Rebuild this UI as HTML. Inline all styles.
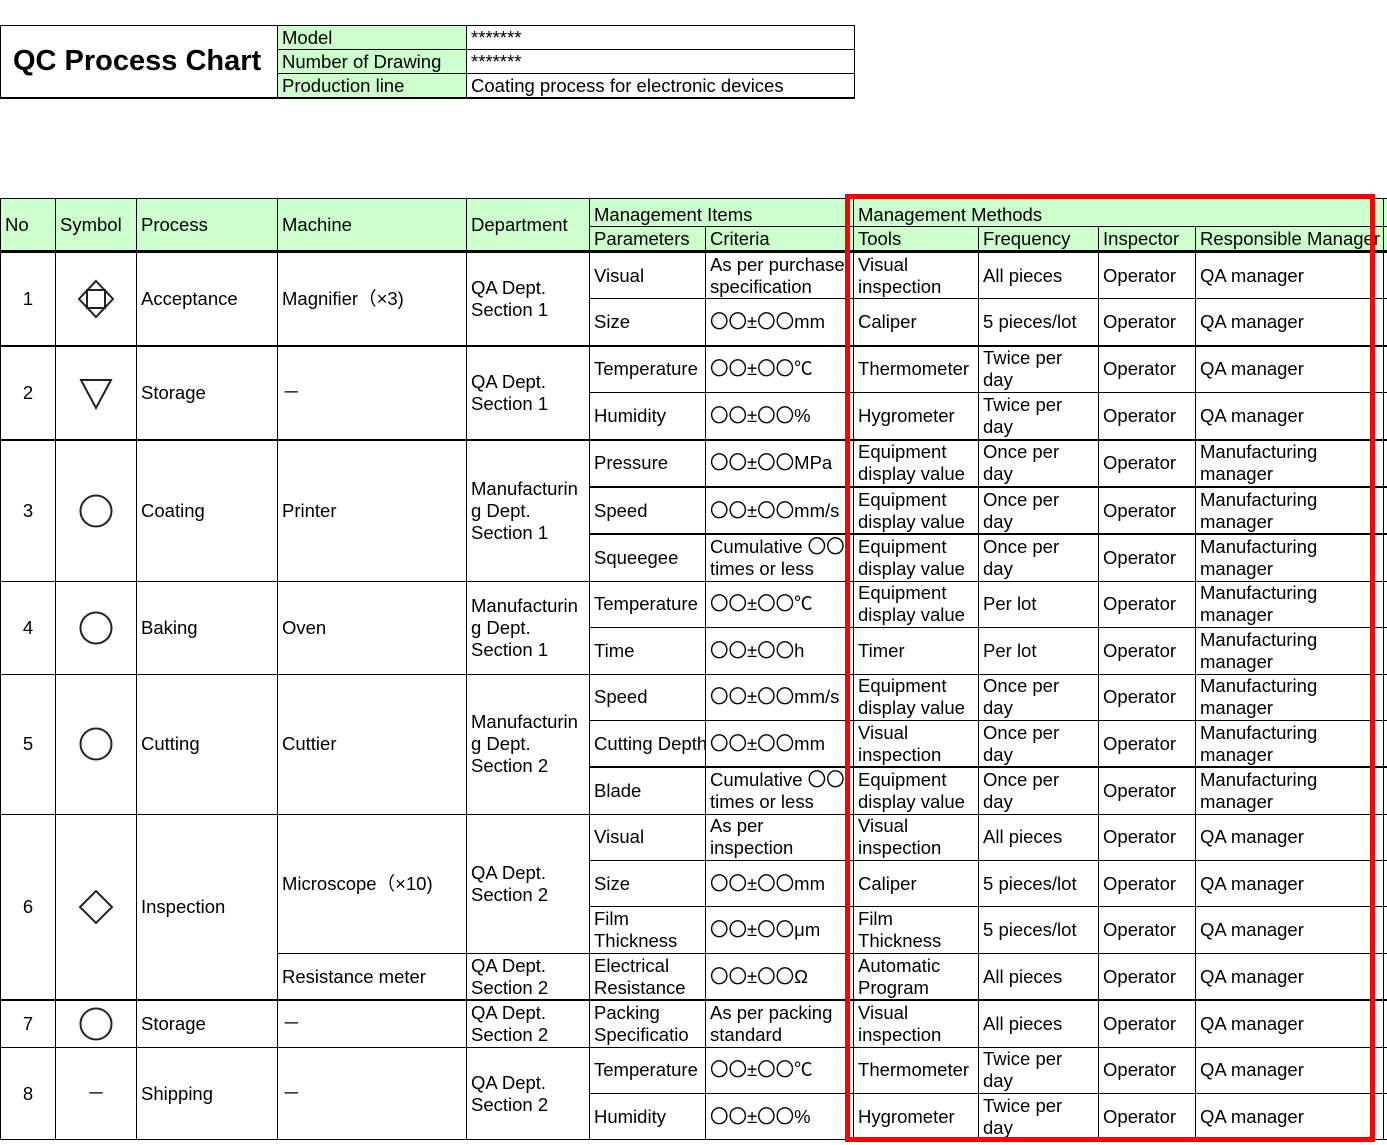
<!DOCTYPE html>
<html><head><meta charset="utf-8"><style>
body{margin:0;width:1387px;height:1145px;overflow:hidden;background:#fff;font-family:"Liberation Sans","Noto Sans CJK JP",sans-serif;font-size:18.5px;color:#000;position:relative}
table{border-collapse:collapse;table-layout:fixed;position:absolute}
td{border:1px solid #000;padding:0 0 0 4px;white-space:nowrap;overflow:hidden;vertical-align:middle;line-height:22px}
.g{background:#ccffcc}
.c{text-align:center;padding:0}
.w{white-space:normal}
#top td{height:23px;line-height:23px;vertical-align:top}
#main tr.b td{height:45.4px}
#main tr.h1 td{height:27px;vertical-align:bottom}
#main tr.h2 td{height:23px;border-bottom:3px solid #000;vertical-align:bottom}
.t{border-top:2px solid #000}
svg{display:block;margin:auto}
</style></head><body>
<table id="top" style="left:0;top:25px;width:854px">
<colgroup><col style="width:277px"><col style="width:189px"><col style="width:388px"></colgroup>
<tr><td rowspan="3" style="font-size:29px;font-weight:bold;vertical-align:middle;padding-left:12px;border-bottom:2px solid #000">QC Process Chart</td><td class="g">Model</td><td>*******</td></tr>
<tr><td class="g">Number of Drawing</td><td>*******</td></tr>
<tr><td class="g" style="border-bottom:2px solid #000">Production line</td><td style="border-bottom:2px solid #000">Coating process for electronic devices</td></tr>
</table>
<table id="main" style="left:0;top:198px;width:1393px">
<colgroup><col style="width:55px"><col style="width:81px"><col style="width:141px"><col style="width:189px"><col style="width:123px"><col style="width:116px"><col style="width:140px"><col style="width:8px"><col style="width:125px"><col style="width:120px"><col style="width:97px"><col style="width:188px"><col style="width:10px"></colgroup>
<tr class="h1"><td class="g" rowspan="2" style="vertical-align:middle;border-bottom:3px solid #000">No</td><td class="g" rowspan="2" style="vertical-align:middle;border-bottom:3px solid #000">Symbol</td><td class="g" rowspan="2" style="vertical-align:middle;border-bottom:3px solid #000">Process</td><td class="g" rowspan="2" style="vertical-align:middle;border-bottom:3px solid #000">Machine</td><td class="g" rowspan="2" style="vertical-align:middle;border-bottom:3px solid #000">Department</td><td class="g" colspan="2">Management Items</td><td class="g"></td><td class="g" colspan="4">Management Methods</td><td class="g"></td></tr>
<tr class="h2"><td class="g">Parameters</td><td class="g">Criteria</td><td class="g"></td><td class="g">Tools</td><td class="g">Frequency</td><td class="g">Inspector</td><td class="g">Responsible Manager</td><td class="g"></td></tr>

<tr class="b"><td class="c" rowspan="2">1</td><td rowspan="2" class="c"><svg width="40" height="46" viewBox="0 0 40 46"><path d="M20 5 L37 23 L20 41 L3 23 Z" fill="none" stroke="#222" stroke-width="2"/><rect x="11" y="14" width="18" height="18" fill="none" stroke="#222" stroke-width="2"/></svg></td><td rowspan="2">Acceptance</td><td rowspan="2">Magnifier（×3)</td><td rowspan="2" class="w">QA Dept.<br>Section 1</td><td>Visual</td><td>As per purchase<br>specification</td><td></td><td>Visual<br>inspection</td><td>All pieces</td><td>Operator</td><td>QA manager</td><td></td></tr>
<tr class="b"><td>Size</td><td>〇〇±〇〇mm</td><td></td><td>Caliper</td><td>5 pieces/lot</td><td>Operator</td><td>QA manager</td><td></td></tr>

<tr class="b"><td class="c t" rowspan="2">2</td><td rowspan="2" class="c t"><svg width="36" height="36" viewBox="0 0 36 36"><path d="M3 5 L33 5 L18 33 Z" fill="none" stroke="#222" stroke-width="2"/></svg></td><td rowspan="2" class="t">Storage</td><td rowspan="2" class="t">－</td><td rowspan="2" class="t">QA Dept.<br>Section 1</td><td class="t">Temperature</td><td class="t">〇〇±〇〇℃</td><td class="t"></td><td class="t">Thermometer</td><td class="t">Twice per<br>day</td><td class="t">Operator</td><td class="t">QA manager</td><td class="t"></td></tr>
<tr class="b"><td>Humidity</td><td>〇〇±〇〇%</td><td></td><td>Hygrometer</td><td>Twice per<br>day</td><td>Operator</td><td>QA manager</td><td></td></tr>

<tr class="b"><td class="c t" rowspan="3">3</td><td rowspan="3" class="c t"><svg width="36" height="36" viewBox="0 0 36 36"><circle cx="18" cy="18" r="15.5" fill="none" stroke="#222" stroke-width="2"/></svg></td><td rowspan="3" class="t">Coating</td><td rowspan="3" class="t">Printer</td><td rowspan="3" class="t">Manufacturin<br>g Dept.<br>Section 1</td><td class="t">Pressure</td><td class="t">〇〇±〇〇MPa</td><td class="t"></td><td class="t">Equipment<br>display value</td><td class="t">Once per<br>day</td><td class="t">Operator</td><td class="t">Manufacturing<br>manager</td><td class="t"></td></tr>
<tr class="b"><td class="t">Speed</td><td class="t">〇〇±〇〇mm/s</td><td class="t"></td><td class="t">Equipment<br>display value</td><td class="t">Once per<br>day</td><td class="t">Operator</td><td class="t">Manufacturing<br>manager</td><td class="t"></td></tr>
<tr class="b"><td class="t">Squeegee</td><td class="t">Cumulative 〇〇<br>times or less</td><td class="t"></td><td class="t">Equipment<br>display value</td><td class="t">Once per<br>day</td><td class="t">Operator</td><td class="t">Manufacturing<br>manager</td><td class="t"></td></tr>

<tr class="b"><td class="c" rowspan="2">4</td><td rowspan="2" class="c"><svg width="36" height="36" viewBox="0 0 36 36"><circle cx="18" cy="18" r="15.5" fill="none" stroke="#222" stroke-width="2"/></svg></td><td rowspan="2">Baking</td><td rowspan="2">Oven</td><td rowspan="2">Manufacturin<br>g Dept.<br>Section 1</td><td>Temperature</td><td>〇〇±〇〇℃</td><td></td><td>Equipment<br>display value</td><td>Per lot</td><td>Operator</td><td>Manufacturing<br>manager</td><td></td></tr>
<tr class="b"><td>Time</td><td>〇〇±〇〇h</td><td></td><td>Timer</td><td>Per lot</td><td>Operator</td><td>Manufacturing<br>manager</td><td></td></tr>

<tr class="b"><td class="c" rowspan="3">5</td><td rowspan="3" class="c"><svg width="36" height="36" viewBox="0 0 36 36"><circle cx="18" cy="18" r="15.5" fill="none" stroke="#222" stroke-width="2"/></svg></td><td rowspan="3">Cutting</td><td rowspan="3">Cuttier</td><td rowspan="3">Manufacturin<br>g Dept.<br>Section 2</td><td>Speed</td><td>〇〇±〇〇mm/s</td><td></td><td>Equipment<br>display value</td><td>Once per<br>day</td><td>Operator</td><td>Manufacturing<br>manager</td><td></td></tr>
<tr class="b"><td>Cutting Depth</td><td>〇〇±〇〇mm</td><td></td><td>Visual<br>inspection</td><td>Once per<br>day</td><td>Operator</td><td>Manufacturing<br>manager</td><td></td></tr>
<tr class="b"><td class="t">Blade</td><td class="t">Cumulative 〇〇<br>times or less</td><td class="t"></td><td class="t">Equipment<br>display value</td><td class="t">Once per<br>day</td><td class="t">Operator</td><td class="t">Manufacturing<br>manager</td><td class="t"></td></tr>

<tr class="b"><td class="c" rowspan="4">6</td><td rowspan="4" class="c"><svg width="40" height="40" viewBox="0 0 40 40"><path d="M20 4 L36 20 L20 36 L4 20 Z" fill="none" stroke="#222" stroke-width="2"/></svg></td><td rowspan="4">Inspection</td><td rowspan="3">Microscope（×10)</td><td rowspan="3">QA Dept.<br>Section 2</td><td>Visual</td><td>As per<br>inspection</td><td></td><td>Visual<br>inspection</td><td>All pieces</td><td>Operator</td><td>QA manager</td><td></td></tr>
<tr class="b"><td>Size</td><td>〇〇±〇〇mm</td><td></td><td>Caliper</td><td>5 pieces/lot</td><td>Operator</td><td>QA manager</td><td></td></tr>
<tr class="b"><td>Film<br>Thickness</td><td>〇〇±〇〇μm</td><td></td><td>Film<br>Thickness</td><td>5 pieces/lot</td><td>Operator</td><td>QA manager</td><td></td></tr>
<tr class="b"><td>Resistance meter</td><td>QA Dept.<br>Section 2</td><td>Electrical<br>Resistance</td><td>〇〇±〇〇Ω</td><td></td><td>Automatic<br>Program</td><td>All pieces</td><td>Operator</td><td>QA manager</td><td></td></tr>

<tr class="b"><td class="c t">7</td><td class="c t"><svg width="36" height="36" viewBox="0 0 36 36"><circle cx="18" cy="18" r="15.5" fill="none" stroke="#222" stroke-width="2"/></svg></td><td class="t">Storage</td><td class="t">－</td><td class="t">QA Dept.<br>Section 2</td><td class="t">Packing<br>Specificatio</td><td class="t">As per packing<br>standard</td><td class="t"></td><td class="t">Visual<br>inspection</td><td class="t">All pieces</td><td class="t">Operator</td><td class="t">QA manager</td><td class="t"></td></tr>

<tr class="b"><td class="c" rowspan="2">8</td><td rowspan="2" class="c">－</td><td rowspan="2">Shipping</td><td rowspan="2">－</td><td rowspan="2">QA Dept.<br>Section 2</td><td>Temperature</td><td>〇〇±〇〇℃</td><td></td><td>Thermometer</td><td>Twice per<br>day</td><td>Operator</td><td>QA manager</td><td></td></tr>
<tr class="b"><td>Humidity</td><td>〇〇±〇〇%</td><td></td><td>Hygrometer</td><td>Twice per<br>day</td><td>Operator</td><td>QA manager</td><td></td></tr>
</table>
<div style="position:absolute;left:845px;top:194px;width:520px;height:938px;border:5px solid #f00"></div>
</body></html>
